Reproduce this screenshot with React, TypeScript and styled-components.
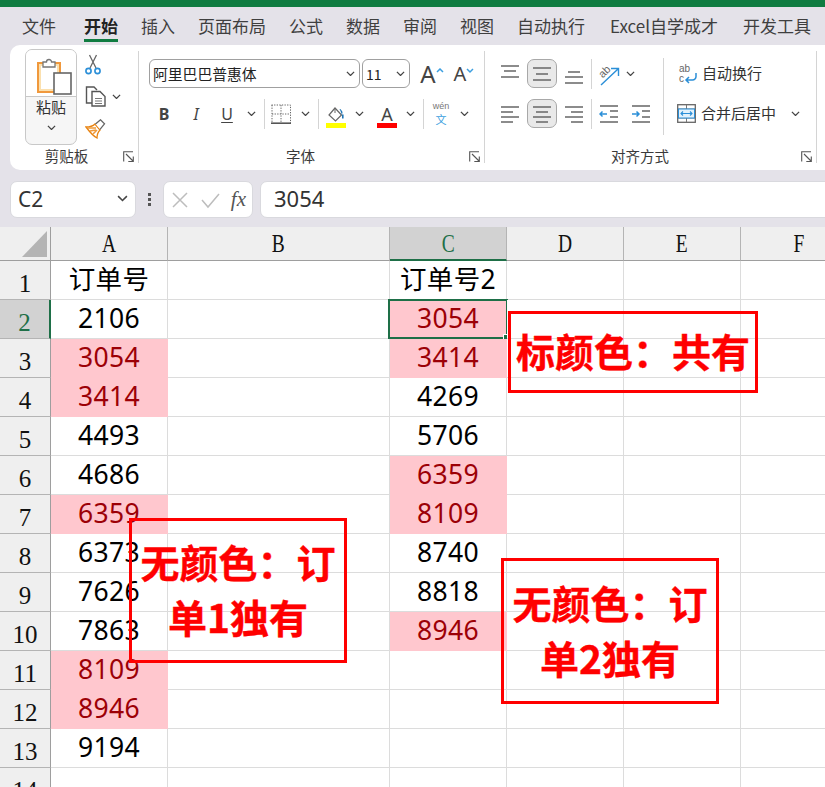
import React from "react";
import styled, { createGlobalStyle } from "styled-components";

const CJK = `"Noto Sans CJK SC", "Noto Sans", sans-serif`;
const CHROME = "#e4e2e9";

const GlobalStyle = createGlobalStyle`
  html, body {
    margin: 0;
    padding: 0;
    background: #fff;
    overflow: hidden;
  }
  * {
    box-sizing: border-box;
  }
`;

const Page = styled.div`
  width: 825px;
  height: 787px;
  overflow: hidden;
  background: ${CHROME};
  font-family: ${CJK};
  color: #333;
`;

const TitleStrip = styled.div`
  height: 7px;
  background: #107c41;
`;

const TabBar = styled.div`
  height: 38px;
  display: flex;
  padding-left: 22px;
  gap: 23px;
`;

const Tab = styled.div<{ $active?: boolean; $ml?: number }>`
  position: relative;
  height: 35px;
  line-height: 38px;
  font-size: 17px;
  white-space: nowrap;
  margin-left: ${({ $ml }) => $ml ?? 0}px;
  color: ${({ $active }) => ($active ? "#222" : "#3f3f3f")};
  font-weight: ${({ $active }) => ($active ? 700 : 400)};
  border-bottom: ${({ $active }) => ($active ? "3px solid #107c41" : "none")};
`;

const Ribbon = styled.div`
  height: 125px;
  margin-left: 10px;
  display: flex;
  background: #fff;
  border-radius: 10px 0 0 10px;
`;

const Group = styled.div<{ $w: number; $pl?: number }>`
  width: ${({ $w }) => $w}px;
  flex: none;
  display: flex;
  flex-direction: column;
  padding-left: ${({ $pl }) => $pl ?? 0}px;
`;

const GroupBody = styled.div<{ $pt: number }>`
  flex: 1;
  display: flex;
  padding-top: ${({ $pt }) => $pt}px;
  min-height: 0;
`;

const GroupFooter = styled.div<{ $ml?: number }>`
  height: 20px;
  margin: 0 4px 4px ${({ $ml }) => $ml ?? 0}px;
  display: flex;
  align-items: center;
`;

const GroupLabel = styled.div<{ $pr?: number }>`
  flex: 1;
  text-align: center;
  font-size: 14.5px;
  line-height: 20px;
  color: #3a3a3a;
  padding-right: ${({ $pr }) => $pr ?? 0}px;
`;

const GroupDivider = styled.div`
  flex: none;
  width: 1px;
  margin: 6px 0 7px;
  background: #d4d4d4;
`;

const PasteButton = styled.div`
  width: 52px;
  height: 96px;
  flex: none;
  border: 1px solid #c8c8c8;
  border-radius: 7px;
  background: #f6f6f6;
  display: flex;
  flex-direction: column;
  align-items: center;
`;

const PasteTop = styled.div`
  width: 100%;
  height: 47px;
  flex: none;
  background: #fff;
  border-bottom: 1px solid #c8c8c8;
  border-radius: 6px 6px 0 0;
  display: flex;
  align-items: flex-end;
  justify-content: center;
  padding-left: 6px;
`;

const PasteLabel = styled.div`
  font-size: 15px;
  line-height: 20px;
  margin: 0 0 8px;
  color: #333;
`;

const ClipTools = styled.div`
  margin-left: 8px;
  display: flex;
  flex-direction: column;
  gap: 3px;
  padding-top: 1px;
`;

const ClipTool = styled.div`
  height: 29px;
  display: flex;
  align-items: center;
  gap: 6px;
`;

const Rows = styled.div<{ $pl?: number; $w?: number }>`
  display: flex;
  flex-direction: column;
  gap: 11px;
  padding-left: ${({ $pl }) => $pl ?? 0}px;
  ${({ $w }) => ($w ? `width: ${$w}px; flex: none;` : "")}
`;

const Row = styled.div`
  height: 29px;
  display: flex;
  align-items: center;
`;

const Slot = styled.div<{ $w: number; $ml?: number }>`
  width: ${({ $w }) => $w}px;
  margin-left: ${({ $ml }) => $ml ?? 0}px;
  height: 29px;
  flex: none;
  display: flex;
  align-items: center;
  justify-content: center;
`;

const ToggledSlot = styled(Slot)`
  background: #e9e9e9;
  border: 1px solid #a8a8a8;
  border-radius: 7px;
`;

const Select = styled.div<{ $w: number; $ml?: number; $size: number }>`
  width: ${({ $w }) => $w}px;
  margin-left: ${({ $ml }) => $ml ?? 0}px;
  height: 29px;
  flex: none;
  border: 1px solid #a0a0a0;
  border-radius: 6px;
  display: flex;
  align-items: center;
  justify-content: space-between;
  padding: 0 4px 0 3px;
  font-size: ${({ $size }) => $size}px;
  color: #222;
`;

const GrowLetter = styled.span<{ $size: number }>`
  font-family: "Noto Sans", sans-serif;
  font-size: ${({ $size }) => $size}px;
  line-height: 1;
  color: #444;
`;

const StyleLetter = styled.span<{ $italic?: boolean; $bold?: boolean; $under?: boolean }>`
  font-family: "Noto Sans", sans-serif;
  font-size: 16px;
  font-weight: ${({ $bold }) => ($bold ? 700 : 400)};
  font-style: ${({ $italic }) => ($italic ? "italic" : "normal")};
  text-decoration: ${({ $under }) => ($under ? "underline" : "none")};
  text-underline-offset: 2px;
  color: #444;
`;

const RowDivider = styled.div<{ $ml?: number }>`
  width: 1px;
  height: 30px;
  flex: none;
  margin-left: ${({ $ml }) => $ml ?? 0}px;
  background: #d4d4d4;
`;

const ColorButton = styled.div`
  display: flex;
  flex-direction: column;
  align-items: center;
  width: 20px;
  height: 29px;
  justify-content: flex-end;
`;

const ColorLetter = styled.span`
  font-family: "Noto Sans", sans-serif;
  font-size: 18px;
  line-height: 18px;
  color: #444;
`;

const ColorBar = styled.div<{ $color: string }>`
  width: 20px;
  height: 5px;
  flex: none;
  background: ${({ $color }) => $color};
`;

const Phonetic = styled.div`
  display: flex;
  flex-direction: column;
  align-items: center;
  padding-top: 1px;
`;

const PhoneticTop = styled.span`
  font-family: "Liberation Sans", sans-serif;
  font-size: 9px;
  line-height: 10px;
  color: #777;
`;

const PhoneticBottom = styled.span`
  font-size: 11px;
  line-height: 16px;
  color: #3c9fe0;
`;

const AlignDivider = styled.div`
  width: 1px;
  height: 77px;
  flex: none;
  margin-top: -1px;
  background: #d4d4d4;
`;

const TextAction = styled.span<{ $ml?: number }>`
  margin: -2px 0 0 ${({ $ml }) => $ml ?? 0}px;
  font-size: 15px;
  color: #333;
  white-space: nowrap;
`;

const FormulaBar = styled.div`
  height: 57px;
  padding: 11px 0 9px 10px;
  display: flex;
  align-items: stretch;
`;

const FormulaBox = styled.div<{ $w?: number; $ml?: number }>`
  ${({ $w }) => ($w ? `width: ${$w}px; flex: none;` : "flex: 1;")}
  margin-left: ${({ $ml }) => $ml ?? 0}px;
  background: #fff;
  border: 1px solid #d9d9de;
  border-radius: 7px;
  display: flex;
  align-items: center;
`;

const NameBox = styled(FormulaBox)`
  justify-content: space-between;
  padding: 0 7px 2px 7px;
  font-family: "Noto Sans", sans-serif;
  font-size: 21px;
  color: #333;
`;

const FormulaDots = styled.div`
  width: 27px;
  flex: none;
  display: flex;
  flex-direction: column;
  align-items: center;
  justify-content: center;
  gap: 2px;
`;

const FormulaDot = styled.i`
  width: 3px;
  height: 3px;
  background: #555;
`;

const FormulaIcons = styled(FormulaBox)`
  justify-content: space-between;
  padding: 0 6px 0 7px;
`;

const FxText = styled.span`
  font-family: "Liberation Serif", serif;
  font-style: italic;
  font-size: 21px;
  color: #555;
`;

const FormulaValue = styled(FormulaBox)`
  padding: 0 0 3px 13px;
  font-family: "Noto Sans", sans-serif;
  font-size: 22px;
  color: #333;
  margin-right: -10px;
`;

const Sheet = styled.div`
  position: relative;
  display: grid;
  grid-template-columns: 51px 117px 222px 117px 117px 117px 117px;
  grid-template-rows: 34px repeat(14, 39px);
  background: #fff;
`;

const Corner = styled.div`
  background: #efefef;
  border-right: 1px solid #9e9e9e;
  border-bottom: 1px solid #9e9e9e;
  display: flex;
  align-items: flex-start;
  justify-content: flex-end;
  padding: 4px 3px 0 0;
`;

const ColHead = styled.div<{ $on?: boolean }>`
  background: ${({ $on }) => ($on ? "#d2d2d2" : "#efefef")};
  border-right: 1px solid #b4b4b4;
  border-bottom: ${({ $on }) => ($on ? "2px solid #1e6f47" : "1px solid #9e9e9e")};
  display: flex;
  align-items: center;
  justify-content: center;
  color: ${({ $on }) => ($on ? "#1e6f47" : "#111")};
`;

const HeadLetter = styled.span`
  display: inline-block;
  font-family: "Liberation Serif", serif;
  font-size: 25px;
  line-height: 1;
  transform: scaleX(0.78);
`;

const RowHead = styled.div<{ $on?: boolean }>`
  background: ${({ $on }) => ($on ? "#d2d2d2" : "#efefef")};
  border-right: ${({ $on }) => ($on ? "2px solid #1e6f47" : "1px solid #9e9e9e")};
  border-bottom: 1px solid #b4b4b4;
  font-family: "Liberation Serif", serif;
  font-size: 25px;
  line-height: 1;
  display: flex;
  align-items: center;
  justify-content: center;
  padding-top: 7px;
  color: ${({ $on }) => ($on ? "#1e6f47" : "#111")};
`;

const Cell = styled.div<{ $hit?: boolean; $open?: boolean }>`
  position: relative;
  border-right: 1px solid ${({ $hit }) => ($hit ? "#ffc7ce" : "#dcdcdc")};
  border-bottom: 1px solid ${({ $hit }) => ($hit ? "#ffc7ce" : "#dcdcdc")};
  background: ${({ $hit }) => ($hit ? "#ffc7ce" : "#fff")};
  color: ${({ $hit }) => ($hit ? "#9c0006" : "#000")};
  font-family: "Noto Sans", ${CJK};
  font-size: 26.5px;
  line-height: 37px;
  letter-spacing: 0.3px;
  text-align: center;
  white-space: nowrap;
`;

const Selection = styled.div`
  position: absolute;
  left: -2px;
  top: -1px;
  right: -2px;
  bottom: -1px;
  border: 2px solid #1e6f47;
`;

const FillHandle = styled.div`
  position: absolute;
  right: -3px;
  bottom: -3px;
  width: 6px;
  height: 6px;
  background: #1e6f47;
  border: 1px solid #fff;
`;

const Callout = styled.div<{ $l: number; $t: number; $w: number; $h: number }>`
  position: absolute;
  left: ${({ $l }) => $l}px;
  top: ${({ $t }) => $t}px;
  width: ${({ $w }) => $w}px;
  height: ${({ $h }) => $h}px;
  border: 3px solid #ff0000;
  color: #ff0000;
  font-family: ${CJK};
  font-weight: 700;
  font-size: 39px;
  -webkit-text-stroke: 0.4px #ff0000;
  line-height: 55px;
  display: flex;
  align-items: center;
  justify-content: center;
  text-align: center;
  padding-bottom: 3px;
`;

const Chevron = ({ w = 10 }: { w?: number }) => (
  <svg width={w} height={w * 0.6} viewBox="0 0 10 6" fill="none">
    <path d="M1 1l4 4 4-4" stroke="#444" strokeWidth="1.4" />
  </svg>
);

// horizontal rules used by the alignment buttons: [x1, x2, y]
const LinesIcon = ({ lines }: { lines: number[][] }) => (
  <svg width="20" height="24" viewBox="0 0 20 24" fill="none">
    {lines.map(([a, b, y], i) => (
      <path key={i} d={`M${a} ${y}H${b}`} stroke="#666" strokeWidth="1.5" />
    ))}
  </svg>
);

const PasteIcon = () => (
  <svg width="36" height="40" viewBox="0 0 36 40" fill="none">
    <rect x="2" y="7" width="22" height="29" fill="#fbe0ae" stroke="#f0983c" strokeWidth="2" />
    <rect x="5" y="10" width="16" height="23" fill="#fff" />
    <path d="M7 11V6h3.5a2.5 2.5 0 0 1 5 0H19v5z" fill="#fff" stroke="#777" strokeWidth="1.3" />
    <rect x="18" y="17" width="17" height="21" fill="#fff" stroke="#666" strokeWidth="1.6" />
  </svg>
);

const ScissorsIcon = () => (
  <svg width="16" height="22" viewBox="0 0 16 22" fill="none">
    <path d="M5 14L11.5 1M11 14L4.5 1" stroke="#666" strokeWidth="1.3" />
    <circle cx="3.5" cy="17" r="2.6" stroke="#2b8fd8" strokeWidth="1.6" />
    <circle cx="12.5" cy="17" r="2.6" stroke="#2b8fd8" strokeWidth="1.6" />
  </svg>
);

const CopyIcon = () => (
  <svg width="21" height="21" viewBox="0 0 21 21" fill="none">
    <path d="M7 17H1.5V1H9l3 3" stroke="#555" strokeWidth="1.4" />
    <path d="M7 5.5h8l5 5v9.5H7z" fill="#fff" stroke="#555" strokeWidth="1.4" />
    <path d="M10 12.5h7M10 15h7M10 17.5h7" stroke="#777" />
  </svg>
);

const BrushIcon = () => (
  <svg width="21" height="20" viewBox="0 0 21 20" fill="none">
    <path d="M1 8c4 0 7-1 9-3l5 6c-2 2-3 5-3 8C8 17 4 12 1 8z" fill="#fff" stroke="#e8820f" strokeWidth="1.3" />
    <path d="M3 9l8 0M5 12l6-1M8 15l4-4" stroke="#f09a3a" strokeWidth="1.6" />
    <path d="M10.5 5l5-4.2 4 4-4.5 5.5" fill="#fff" stroke="#666" strokeWidth="1.3" />
  </svg>
);

const LauncherIcon = () => (
  <svg width="11" height="11" viewBox="0 0 11 11" fill="none">
    <path d="M0.7 10.5V0.7H10" stroke="#555" strokeWidth="1.1" />
    <path d="M3 3l7 7M10.3 5.5v5H5.3" stroke="#555" strokeWidth="1.1" />
  </svg>
);

const CaretIcon = ({ down }: { down?: boolean }) => (
  <svg width="8" height="12" viewBox="0 0 8 12" fill="none">
    <path d={down ? "M1 1l3 3 3-3" : "M1 4l3-3 3 3"} stroke="#3c9fe0" strokeWidth="1.5" />
  </svg>
);

const BorderIcon = () => (
  <svg width="20" height="20" viewBox="0 0 20 20" fill="none">
    <path d="M.5 1H19.5V19M1 1v18M10 1v18M1 10h18" stroke="#666" strokeDasharray="1.3 1.3" />
    <path d="M0 19.2h20" stroke="#555" strokeWidth="1.6" />
  </svg>
);

const BucketIcon = () => (
  <svg width="20" height="16" viewBox="0 0 20 16" fill="none">
    <path d="M9 1l6.5 7-6 6L3 8z" fill="#fff" stroke="#666" strokeWidth="1.2" />
    <path d="M9 1v5" stroke="#666" />
    <path d="M16.5 5c-1-1-1-3-3-3l1 2 1.5 4z" fill="#1e76b8" />
    <path d="M16.8 7.5v4" stroke="#1e76b8" strokeWidth="1.6" />
  </svg>
);

const OrientIcon = () => (
  <svg width="24" height="24" viewBox="0 0 24 24" fill="none">
    <path d="M5 23L22 7M15 6.5h7.5V14" stroke="#2b8fd8" strokeWidth="1.4" />
    <text
      x="9"
      y="13"
      fontSize="11"
      textAnchor="middle"
      fontFamily="Liberation Sans, sans-serif"
      fill="#666"
      transform="rotate(-45 9 10)"
    >
      ab
    </text>
  </svg>
);

const IndentIcon = ({ flip }: { flip?: boolean }) => (
  <svg width="20" height="20" viewBox="0 0 20 20" fill="none">
    <path d="M1 2h18M1 18h18M11 7h8M11 13h8" stroke="#666" strokeWidth="1.4" />
    {flip ? (
      <path d="M1 10h7M5.5 7.5L8 10l-2.5 2.5" stroke="#2b8fd8" strokeWidth="1.5" />
    ) : (
      <path d="M8 10H1M3.5 7.5L1 10l2.5 2.5" stroke="#2b8fd8" strokeWidth="1.5" />
    )}
  </svg>
);

const WrapIcon = () => (
  <svg width="20" height="22" viewBox="0 0 20 22" fill="none">
    <text x="1" y="9" fontSize="10" fontFamily="Liberation Sans, sans-serif" fill="#666">
      ab
    </text>
    <text x="1" y="19" fontSize="10" fontFamily="Liberation Sans, sans-serif" fill="#666">
      c
    </text>
    <path d="M18 10v3.5a3.5 3.5 0 0 1-3.5 3.5H8M11 14l-3 3 3 3" stroke="#2b8fd8" strokeWidth="1.5" />
  </svg>
);

const MergeIcon = () => (
  <svg width="19" height="19" viewBox="0 0 19 19" fill="none">
    <rect x=".7" y=".7" width="17.6" height="17.6" fill="#fff" stroke="#666" strokeWidth="1.3" />
    <path d="M1 5h17M1 14h17M9.5 1v4M9.5 14v4" stroke="#777" />
    <rect x="1.5" y="5" width="16" height="9" fill="#e2f1fb" stroke="#2b8fd8" />
    <path d="M4 9.5h11M6 7.5l-2 2 2 2M13 7.5l2 2-2 2" stroke="#2b8fd8" strokeWidth="1.1" />
  </svg>
);

const CornerTriangle = () => (
  <svg width="25" height="26" viewBox="0 0 25 26">
    <path d="M25 0V26H0z" fill="#b4b4b4" />
  </svg>
);

const MarkIcon = ({ d }: { d: string }) => (
  <svg width="19" height="18" viewBox="0 0 19 18" fill="none">
    <path d={d} stroke="#bdbdbd" strokeWidth="1.5" />
  </svg>
);

// ml: the tabs are not evenly spaced in the ribbon
const TABS: { label: string; ml?: number }[] = [
  { label: "文件" },
  { label: "开始", ml: 5 },
  { label: "插入" },
  { label: "页面布局" },
  { label: "公式" },
  { label: "数据" },
  { label: "审阅" },
  { label: "视图" },
  { label: "自动执行" },
  { label: "Excel自学成才", ml: 2 },
  { label: "开发工具", ml: 2 },
];
const COLUMNS = ["A", "B", "C", "D", "E", "F"];

// cell text per row for column A and C, plus a highlight flag
const ROWS: { a?: string; aHit?: boolean; c?: string; cHit?: boolean }[] = [
  { a: "订单号", c: "订单号2" },
  { a: "2106", c: "3054", cHit: true },
  { a: "3054", aHit: true, c: "3414", cHit: true },
  { a: "3414", aHit: true, c: "4269" },
  { a: "4493", c: "5706" },
  { a: "4686", c: "6359", cHit: true },
  { a: "6359", aHit: true, c: "8109", cHit: true },
  { a: "6373", c: "8740" },
  { a: "7626", c: "8818" },
  { a: "7863", c: "8946", cHit: true },
  { a: "8109", aHit: true },
  { a: "8946", aHit: true },
  { a: "9194" },
  {},
];

const TOP_LINES = [[1, 19, 4], [4, 16, 9], [1, 19, 15]];
const MID_LINES = [[1, 19, 6], [4, 16, 12], [1, 19, 18]];
const BOTTOM_LINES = [[4, 16, 10], [1, 19, 15], [1, 19, 21]];
const LEFT_LINES = [[1, 19, 5], [1, 13, 10], [1, 19, 15], [1, 13, 20]];
const CENTER_LINES = [[1, 19, 5], [4, 16, 10], [1, 19, 15], [4, 16, 20]];
const RIGHT_LINES = [[1, 19, 5], [7, 19, 10], [1, 19, 15], [7, 19, 20]];

const App: React.FC = () => {
  return (
    <Page>
      <GlobalStyle />
      <TitleStrip />
      <TabBar>
        {TABS.map((tab) => (
          <Tab key={tab.label} $active={tab.label === "开始"} $ml={tab.ml}>
            {tab.label}
          </Tab>
        ))}
      </TabBar>

      <Ribbon>
        <Group $w={128}>
          <GroupBody $pt={4}>
            <Slot $w={15} />
            <PasteButton>
              <PasteTop>
                <PasteIcon />
              </PasteTop>
              <PasteLabel>粘贴</PasteLabel>
              <Chevron w={9} />
            </PasteButton>
            <ClipTools>
              <ClipTool>
                <ScissorsIcon />
              </ClipTool>
              <ClipTool>
                <CopyIcon />
                <Chevron w={9} />
              </ClipTool>
              <ClipTool>
                <BrushIcon />
              </ClipTool>
            </ClipTools>
          </GroupBody>
          <GroupFooter>
            <GroupLabel>剪贴板</GroupLabel>
            <LauncherIcon />
          </GroupFooter>
        </Group>
        <GroupDivider />

        <Group $w={345}>
          <GroupBody $pt={14}>
            <Rows $pl={10}>
              <Row>
                <Select $w={211} $size={14.8}>
                  阿里巴巴普惠体
                  <Chevron w={9} />
                </Select>
                <Select $w={48} $ml={2} $size={14}>
                  11
                  <Chevron w={9} />
                </Select>
                <Slot $w={32} $ml={6}>
                  <GrowLetter $size={24}>A</GrowLetter>
                  <CaretIcon />
                </Slot>
                <Slot $w={28} $ml={2}>
                  <GrowLetter $size={20}>A</GrowLetter>
                  <CaretIcon down />
                </Slot>
              </Row>
              <Row>
                <Slot $w={30}>
                  <StyleLetter $bold>B</StyleLetter>
                </Slot>
                <Slot $w={34}>
                  <StyleLetter $italic>I</StyleLetter>
                </Slot>
                <Slot $w={28}>
                  <StyleLetter $under>U</StyleLetter>
                </Slot>
                <Slot $w={20}>
                  <Chevron w={9} />
                </Slot>
                <RowDivider $ml={3} />
                <Slot $w={32}>
                  <BorderIcon />
                </Slot>
                <Slot $w={16}>
                  <Chevron w={9} />
                </Slot>
                <RowDivider $ml={5} />
                <Slot $w={34}>
                  <ColorButton>
                    <BucketIcon />
                    <ColorBar $color="#ffff00" />
                  </ColorButton>
                </Slot>
                <Slot $w={12}>
                  <Chevron w={9} />
                </Slot>
                <Slot $w={30} $ml={7}>
                  <ColorButton>
                    <ColorLetter>A</ColorLetter>
                    <ColorBar $color="#ff0000" />
                  </ColorButton>
                </Slot>
                <Slot $w={16}>
                  <Chevron w={9} />
                </Slot>
                <RowDivider $ml={5} />
                <Slot $w={34}>
                  <Phonetic>
                    <PhoneticTop>wén</PhoneticTop>
                    <PhoneticBottom>文</PhoneticBottom>
                  </Phonetic>
                </Slot>
                <Slot $w={12}>
                  <Chevron w={9} />
                </Slot>
              </Row>
            </Rows>
          </GroupBody>
          <GroupFooter>
            <GroupLabel $pr={7}>字体</GroupLabel>
            <LauncherIcon />
          </GroupFooter>
        </Group>
        <GroupDivider />

        <Group $w={331}>
          <GroupBody $pt={14}>
            <Rows $pl={10} $w={178}>
              <Row>
                <Slot $w={30}>
                  <LinesIcon lines={TOP_LINES} />
                </Slot>
                <ToggledSlot $w={30} $ml={2}>
                  <LinesIcon lines={MID_LINES} />
                </ToggledSlot>
                <Slot $w={34}>
                  <LinesIcon lines={BOTTOM_LINES} />
                </Slot>
                <RowDivider />
                <Slot $w={32}>
                  <OrientIcon />
                </Slot>
                <Slot $w={12}>
                  <Chevron w={9} />
                </Slot>
              </Row>
              <Row>
                <Slot $w={30}>
                  <LinesIcon lines={LEFT_LINES} />
                </Slot>
                <ToggledSlot $w={30} $ml={2}>
                  <LinesIcon lines={CENTER_LINES} />
                </ToggledSlot>
                <Slot $w={34}>
                  <LinesIcon lines={RIGHT_LINES} />
                </Slot>
                <RowDivider />
                <Slot $w={34}>
                  <IndentIcon />
                </Slot>
                <Slot $w={30}>
                  <IndentIcon flip />
                </Slot>
              </Row>
            </Rows>
            <AlignDivider />
            <Rows>
              <Row>
                <Slot $w={24} $ml={12}>
                  <WrapIcon />
                </Slot>
                <TextAction $ml={2}>自动换行</TextAction>
              </Row>
              <Row>
                <Slot $w={24} $ml={10}>
                  <MergeIcon />
                </Slot>
                <TextAction $ml={3}>合并后居中</TextAction>
                <Slot $w={12} $ml={13}>
                  <Chevron w={9} />
                </Slot>
              </Row>
            </Rows>
          </GroupBody>
          <GroupFooter>
            <GroupLabel $pr={6}>对齐方式</GroupLabel>
            <LauncherIcon />
          </GroupFooter>
        </Group>
        <GroupDivider />
      </Ribbon>

      <FormulaBar>
        <NameBox $w={126}>
          C2
          <Chevron w={11} />
        </NameBox>
        <FormulaDots>
          <FormulaDot />
          <FormulaDot />
          <FormulaDot />
        </FormulaDots>
        <FormulaIcons $w={90}>
          <MarkIcon d="M2 2l14 14M16 2L2 16" />
          <MarkIcon d="M1 9l6 7L18 3" />
          <FxText>fx</FxText>
        </FormulaIcons>
        <FormulaValue $ml={7}>3054</FormulaValue>
      </FormulaBar>

      <Sheet>
        <Corner>
          <CornerTriangle />
        </Corner>
        {COLUMNS.map((col) => (
          <ColHead key={col} $on={col === "C"}>
            <HeadLetter>{col}</HeadLetter>
          </ColHead>
        ))}
        {ROWS.map((row, index) => (
          <React.Fragment key={index}>
            <RowHead $on={index === 1}>{index + 1}</RowHead>
            <Cell $hit={row.aHit}>{row.a}</Cell>
            <Cell />
            <Cell $hit={row.cHit}>
              {row.c}
              {index === 1 && (
                <Selection>
                  <FillHandle />
                </Selection>
              )}
            </Cell>
            <Cell />
            <Cell />
            <Cell />
          </React.Fragment>
        ))}
        <Callout $l={508} $t={84} $w={250} $h={82}>
          标颜色：共有
        </Callout>
        <Callout $l={129} $t={291} $w={218} $h={145}>
          无颜色：订单1独有
        </Callout>
        <Callout $l={501} $t={331} $w={218} $h={146}>
          无颜色：订单2独有
        </Callout>
      </Sheet>
    </Page>
  );
};

export default App;
